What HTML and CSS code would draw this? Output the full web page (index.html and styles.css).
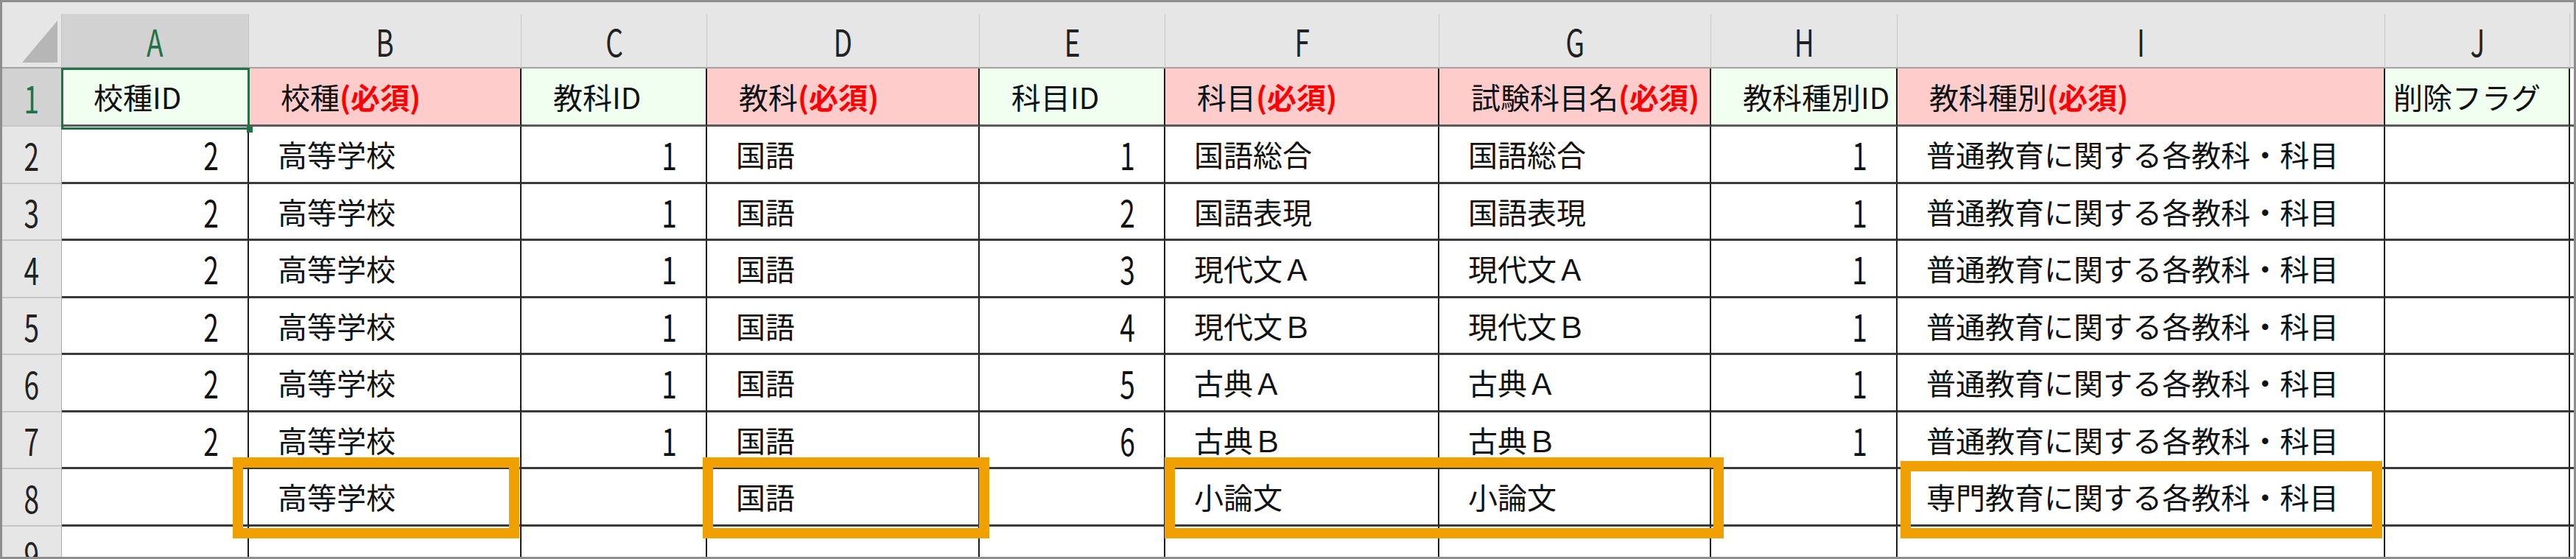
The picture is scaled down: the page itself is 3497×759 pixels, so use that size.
FILE: index.html
```html
<!DOCTYPE html>
<html lang="ja">

<head>
    <meta charset="UTF-8">
    <title>教科・科目マスタ</title>
    <link rel="stylesheet" href="styles.css">
</head>

<body>

    <div class="sheet">
        <div class="topbar"></div>

        <!-- column letters -->
        <div class="row head">
            <div class="corner">
                <svg width="80" height="74" viewBox="0 0 80 74"><polygon points="27,67 75,67 75,10" fill="#b6b6b6"/></svg>
            </div>
            <div class="ch sel"><span class="n">A</span></div>
            <div class="ch"><span class="n">B</span></div>
            <div class="ch"><span class="n">C</span></div>
            <div class="ch"><span class="n">D</span></div>
            <div class="ch"><span class="n">E</span></div>
            <div class="ch"><span class="n">F</span></div>
            <div class="ch"><span class="n">G</span></div>
            <div class="ch"><span class="n">H</span></div>
            <div class="ch"><span class="n">I</span></div>
            <div class="ch"><span class="n">J</span></div>
            <div class="ch last"></div>
        </div>

        <!-- field names -->
        <div class="row fields">
            <div class="rh sel"><span class="n">1</span></div>
            <div class="c g">校種ID</div>
            <div class="c p">校種<span class="req">(必須)</span></div>
            <div class="c g">教科ID</div>
            <div class="c p">教科<span class="req">(必須)</span></div>
            <div class="c g">科目ID</div>
            <div class="c p">科目<span class="req">(必須)</span></div>
            <div class="c p">試験科目名<span class="req">(必須)</span></div>
            <div class="c g">教科種別ID</div>
            <div class="c p">教科種別<span class="req">(必須)</span></div>
            <div class="c g tight">削除フラグ</div>
            <div class="c last"></div>
        </div>

        <div class="row">
            <div class="rh"><span class="n">2</span></div>
            <div class="c num"><span class="n">2</span></div>
            <div class="c">高等学校</div>
            <div class="c num"><span class="n">1</span></div>
            <div class="c">国語</div>
            <div class="c num"><span class="n">1</span></div>
            <div class="c">国語総合</div>
            <div class="c">国語総合</div>
            <div class="c num"><span class="n">1</span></div>
            <div class="c">普通教育に関する各教科・科目</div>
            <div class="c"></div>
            <div class="c last"></div>
        </div>

        <div class="row">
            <div class="rh"><span class="n">3</span></div>
            <div class="c num"><span class="n">2</span></div>
            <div class="c">高等学校</div>
            <div class="c num"><span class="n">1</span></div>
            <div class="c">国語</div>
            <div class="c num"><span class="n">2</span></div>
            <div class="c">国語表現</div>
            <div class="c">国語表現</div>
            <div class="c num"><span class="n">1</span></div>
            <div class="c">普通教育に関する各教科・科目</div>
            <div class="c"></div>
            <div class="c last"></div>
        </div>

        <div class="row">
            <div class="rh"><span class="n">4</span></div>
            <div class="c num"><span class="n">2</span></div>
            <div class="c">高等学校</div>
            <div class="c num"><span class="n">1</span></div>
            <div class="c">国語</div>
            <div class="c num"><span class="n">3</span></div>
            <div class="c">現代文Ａ</div>
            <div class="c">現代文Ａ</div>
            <div class="c num"><span class="n">1</span></div>
            <div class="c">普通教育に関する各教科・科目</div>
            <div class="c"></div>
            <div class="c last"></div>
        </div>

        <div class="row">
            <div class="rh"><span class="n">5</span></div>
            <div class="c num"><span class="n">2</span></div>
            <div class="c">高等学校</div>
            <div class="c num"><span class="n">1</span></div>
            <div class="c">国語</div>
            <div class="c num"><span class="n">4</span></div>
            <div class="c">現代文Ｂ</div>
            <div class="c">現代文Ｂ</div>
            <div class="c num"><span class="n">1</span></div>
            <div class="c">普通教育に関する各教科・科目</div>
            <div class="c"></div>
            <div class="c last"></div>
        </div>

        <div class="row">
            <div class="rh"><span class="n">6</span></div>
            <div class="c num"><span class="n">2</span></div>
            <div class="c">高等学校</div>
            <div class="c num"><span class="n">1</span></div>
            <div class="c">国語</div>
            <div class="c num"><span class="n">5</span></div>
            <div class="c">古典Ａ</div>
            <div class="c">古典Ａ</div>
            <div class="c num"><span class="n">1</span></div>
            <div class="c">普通教育に関する各教科・科目</div>
            <div class="c"></div>
            <div class="c last"></div>
        </div>

        <div class="row">
            <div class="rh"><span class="n">7</span></div>
            <div class="c num"><span class="n">2</span></div>
            <div class="c">高等学校</div>
            <div class="c num"><span class="n">1</span></div>
            <div class="c">国語</div>
            <div class="c num"><span class="n">6</span></div>
            <div class="c">古典Ｂ</div>
            <div class="c">古典Ｂ</div>
            <div class="c num"><span class="n">1</span></div>
            <div class="c">普通教育に関する各教科・科目</div>
            <div class="c"></div>
            <div class="c last"></div>
        </div>

        <div class="row">
            <div class="rh"><span class="n">8</span></div>
            <div class="c num"></div>
            <div class="c">高等学校</div>
            <div class="c num"></div>
            <div class="c">国語</div>
            <div class="c num"></div>
            <div class="c">小論文</div>
            <div class="c">小論文</div>
            <div class="c num"></div>
            <div class="c">専門教育に関する各教科・科目</div>
            <div class="c"></div>
            <div class="c last"></div>
        </div>

        <div class="row">
            <div class="rh"><span class="n">9</span></div>
            <div class="c"></div>
            <div class="c"></div>
            <div class="c"></div>
            <div class="c"></div>
            <div class="c"></div>
            <div class="c"></div>
            <div class="c"></div>
            <div class="c"></div>
            <div class="c"></div>
            <div class="c"></div>
            <div class="c last"></div>
        </div>

        <!-- active cell A1 -->
        <div class="cursor"><span class="handle"></span></div>

        <!-- orange highlight boxes on row 8 -->
        <div class="mark mark-b"></div>
        <div class="mark mark-d"></div>
        <div class="mark mark-fg"></div>
        <div class="mark mark-i"></div>
    </div>

</body>

</html>
```

FILE: styles.css
```css
body {
    margin: 0;
    background-color: #fff;
}

.sheet {
    position: relative;
    width: 3497px;
    height: 759px;
    box-sizing: border-box;
    border: 3px solid #8e8e8e;
    overflow: hidden;
    background-color: #fff;
    font-family: "Noto Sans CJK JP", sans-serif;
    font-size: 40px;
    line-height: 1;
    color: #111;
}

.topbar {
    height: 16px;
    background-color: #e6e6e6;
}

.row {
    display: grid;
    grid-template-columns: 81px 254px 370px 252px 370px 252px 372px 369px 253px 662px 251px 1fr;
    height: 77.5px;
}

.row.head {
    height: 74px;
}

.row.fields {
    height: 79px;
}

.row > div {
    display: flex;
    align-items: center;
    box-sizing: border-box;
    white-space: nowrap;
    overflow: hidden;
}

/* narrow digits and letters, as Excel draws them */
.n {
    display: inline-block;
    transform: scaleX(0.74);
}

/* column letters */
.corner {
    background-color: #e6e6e6;
    border-right: 1px solid #c4c4c4;
    border-bottom: 2px solid #a3a3a3;
}

.corner svg {
    display: block;
}

.ch {
    justify-content: center;
    background-color: #e6e6e6;
    border-right: 1px solid #c6c6c6;
    border-bottom: 2px solid #a3a3a3;
    font-size: 50px;
    color: #222;
}

.ch.sel {
    background-color: #d2d2d2;
    color: #217346;
}

.ch.last {
    border-right: none;
}

/* row numbers */
.rh {
    justify-content: center;
    background-color: #e6e6e6;
    border-right: 1px solid #a9a9a9;
    border-bottom: 2px solid #c6c6c6;
    font-size: 50px;
    color: #222;
}

.rh.sel {
    background-color: #d2d2d2;
    color: #217346;
}

/* cells */
.c {
    padding: 0 39px;
    border-right: 2px solid #1c1c1c;
    border-bottom: 3px solid #3a3a3a;
}

.c.last {
    border-right: none;
}

.c.num {
    justify-content: flex-end;
    font-size: 50px;
}

.c.num .n {
    transform-origin: right center;
}

.fields .c {
    padding-left: 43px;
    border-bottom-color: #5a5a5a;
}

.fields .c.tight {
    padding-left: 11px;
}

.g {
    background-color: #f0fff0;
}

.p {
    background-color: #ffcccc;
}

.req {
    color: #ff0000;
    font-weight: bold;
}

/* selection of A1 */
.cursor {
    position: absolute;
    left: 80px;
    top: 89px;
    width: 256px;
    height: 84px;
    box-sizing: border-box;
    border: 3px solid #217346;
}

.handle {
    position: absolute;
    right: -7px;
    bottom: -7px;
    width: 8px;
    height: 8px;
    background-color: #217346;
}

/* orange boxes */
.mark {
    position: absolute;
    box-sizing: border-box;
    border: 14px solid #f0a000;
}

.mark-b {
    left: 313px;
    top: 618px;
    width: 389px;
    height: 110px;
}

.mark-d {
    left: 951px;
    top: 618px;
    width: 389px;
    height: 110px;
}

.mark-fg {
    left: 1578px;
    top: 618px;
    width: 759px;
    height: 110px;
}

.mark-i {
    left: 2577px;
    top: 623px;
    width: 654px;
    height: 105px;
}
```
